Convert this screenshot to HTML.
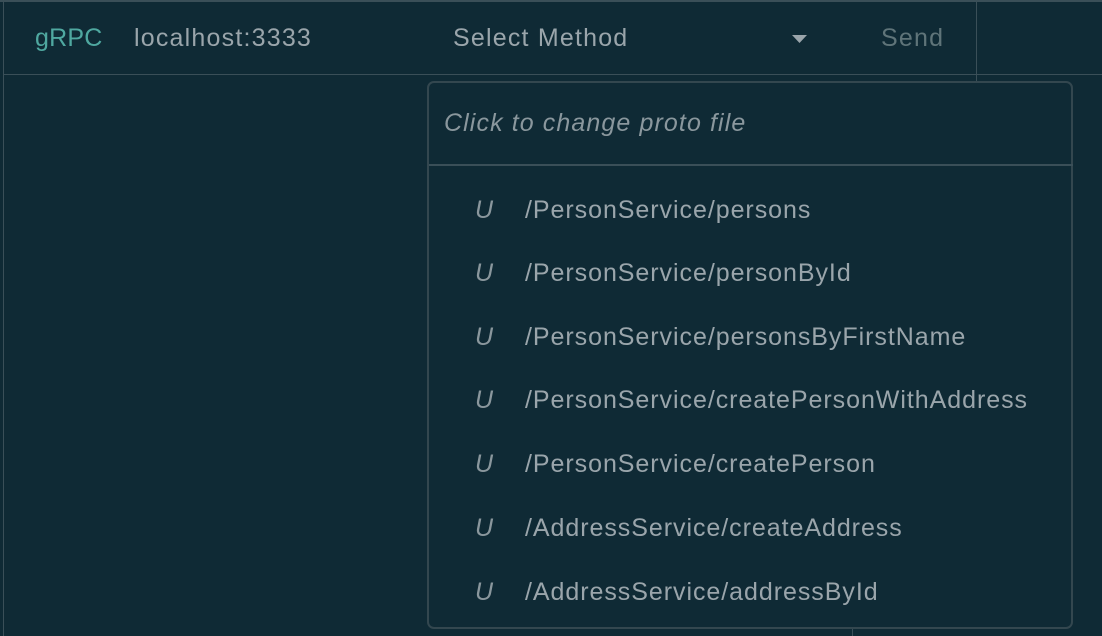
<!DOCTYPE html>
<html><head><meta charset="utf-8"><style>
*{margin:0;padding:0;box-sizing:border-box}
body{width:1102px;height:636px;background:#0f2a35;overflow:hidden;position:relative;font-family:"Liberation Sans",sans-serif;}
.t{position:absolute;white-space:nowrap;font-size:25px;line-height:28px;letter-spacing:1.2px}
.line{position:absolute;background:#3a4f58}
.box{position:absolute;left:427px;top:81px;width:646px;height:548px;border:2px solid #33474f;border-radius:7px;background:#0f2a35}
.u{position:absolute;left:46px;font-style:italic;color:#8a979d;font-size:25px;line-height:28px}
.m{position:absolute;left:96px;color:#9aa5ab;font-size:25px;line-height:28px;white-space:nowrap;letter-spacing:0.95px}
</style></head><body>
<div class="line" style="left:0;top:0;width:1102px;height:2px"></div>
<div class="line" style="left:3px;top:0;width:1px;height:636px"></div>
<div class="line" style="left:3px;top:74px;width:1099px;height:1px"></div>
<div class="line" style="left:976px;top:0;width:1px;height:81px"></div>
<div class="line" style="left:852px;top:629px;width:1px;height:7px"></div>
<div class="t" style="left:35px;top:24px;color:#4fa8a0;letter-spacing:0.2px">gRPC</div>
<div class="t" style="left:134px;top:24px;color:#9aa5ab">localhost:3333</div>
<div class="t" style="left:453px;top:24px;color:#9aa5ab">Select Method</div>
<svg style="position:absolute;left:792px;top:35px" width="15" height="9"><path d="M0 0H15L7.5 8Z" fill="#9aa5ab"/></svg>
<div class="t" style="left:881px;top:24px;color:#5f7479">Send</div>
<div class="box">
<div class="t" style="left:15px;top:26px;font-style:italic;color:#8a979d;letter-spacing:1.1px">Click to change proto file</div>
<div style="position:absolute;left:0;top:81px;width:644px;height:2px;background:#3a4f58"></div>
<div class="u" style="top:113px">U</div><div class="m" style="top:113px">/PersonService/persons</div>
<div class="u" style="top:176px">U</div><div class="m" style="top:176px">/PersonService/personById</div>
<div class="u" style="top:240px">U</div><div class="m" style="top:240px">/PersonService/personsByFirstName</div>
<div class="u" style="top:303px">U</div><div class="m" style="top:303px">/PersonService/createPersonWithAddress</div>
<div class="u" style="top:367px">U</div><div class="m" style="top:367px">/PersonService/createPerson</div>
<div class="u" style="top:431px">U</div><div class="m" style="top:431px">/AddressService/createAddress</div>
<div class="u" style="top:495px">U</div><div class="m" style="top:495px">/AddressService/addressById</div>
</div>
</body></html>
